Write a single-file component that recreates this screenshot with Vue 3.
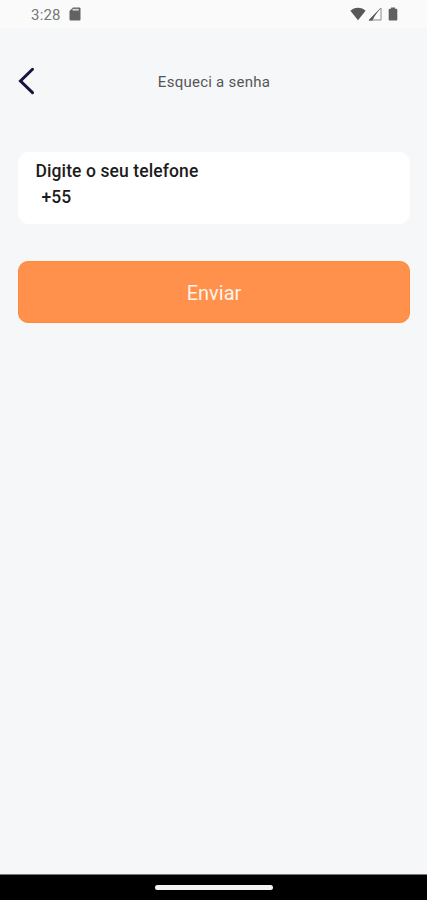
<script setup>
import { ref } from 'vue'

const title = ref('Esqueci a senha')
const phone = ref('+55')
</script>

<template>
  <div class="screen">
    <header class="status">
      <span class="clock">3:28</span>
      <svg class="sd" width="12" height="14" viewBox="0 0 12 14">
        <path d="M4 .5h6.500a1 1 0 0 1 1 1v11a1 1 0 0 1-1 1h-9a1 1 0 0 1-1-1V4z" fill="#626262" />
        <path d="M3.500 2.700h6.300" stroke="#d4d4d4" stroke-width="1.800" />
      </svg>
      <div class="indicators">
        <svg width="16" height="14" viewBox="0 0 16 14">
          <path d="M8 13.200 .4 3.700C2.500 1.700 5 .7 8 .7s5.500 1 7.600 3z" fill="#585858" />
        </svg>
        <svg class="signal" width="14" height="14" viewBox="0 0 14 14">
          <path d="M13 1v12H1z" fill="#fff" stroke="#888" stroke-width="1" />
          <path d="M.5 13.500 12.500 1 6.500 9.500 4.500 13.500z" fill="#5c5c5c" />
        </svg>
        <svg class="battery" width="10" height="14" viewBox="0 0 10 14">
          <path d="M3 .4h4v1.400h1.500a.8.8 0 0 1 .8.800v10.200a.8.8 0 0 1-.8.800h-7a.8.8 0 0 1-.8-.800V2.600a.8.8 0 0 1 .8-.800H3z" fill="#606060" />
        </svg>
      </div>
    </header>

    <nav class="bar">
      <button class="back" type="button" aria-label="Voltar">
        <svg width="17" height="28" viewBox="0 0 17 28">
          <path d="M14.500 2.300 2.500 14l12 11.600" fill="none" stroke="#15143f" stroke-width="3" stroke-linecap="round" stroke-linejoin="miter" />
        </svg>
      </button>
      <h1 class="title">{{ title }}</h1>
    </nav>

    <main class="content">
      <label class="field">
        <span class="label">Digite o seu telefone</span>
        <span class="value">{{ phone }}</span>
      </label>
      <button class="submit" type="button">Enviar</button>
    </main>

    <footer class="gesture"><span class="handle"></span></footer>
  </div>
</template>

<style>
body {
  margin: 0;
  background: #f5f7f9;
}
</style>

<style scoped>
.screen {
  box-sizing: border-box;
  width: 427px;
  height: 900px;
  display: flex;
  flex-direction: column;
  overflow: hidden;
  background: #f5f7f9;
  font-family: Roboto, "Liberation Sans", sans-serif;
}
.screen svg {
  display: block;
}
.status {
  box-sizing: border-box;
  height: 28px;
  padding: 0 29px 0 31px;
  display: flex;
  align-items: center;
  background: #fafafa;
}
.clock {
  width: 38px;
  font-size: 15px;
  line-height: 28px;
  letter-spacing: 0.2px;
  color: #777;
  padding-top: 2px;
}
.indicators {
  margin-left: auto;
  display: flex;
  align-items: center;
}
.signal {
  margin-left: 2px;
}
.battery {
  margin-left: 6px;
}
.bar {
  height: 106px;
  display: grid;
  grid-template-columns: 60px 1fr 60px;
  align-items: center;
}
.back {
  margin: 0 0 0 18px;
  padding: 0;
  width: 17px;
  height: 28px;
  border: 0;
  background: none;
}
.title {
  margin: 2px 0 0;
  padding-left: 1px;
  text-align: center;
  font-size: 15px;
  line-height: 20px;
  font-weight: 400;
  letter-spacing: 0.25px;
  color: #555657;
}
.content {
  flex: 1;
  display: flex;
  flex-direction: column;
  padding: 18px 17px 0 18px;
}
.field {
  box-sizing: border-box;
  height: 72px;
  padding: 6px 17.500px;
  display: flex;
  flex-direction: column;
  border-radius: 11px;
  background: #fff;
  color: #1c1c1c;
  font-weight: 500;
}
.label {
  font-size: 17.500px;
  line-height: 26px;
  letter-spacing: 0.1px;
}
.value {
  padding-left: 6px;
  font-size: 17.500px;
  line-height: 26px;
}
.submit {
  box-sizing: border-box;
  height: 62px;
  margin-top: 37px;
  padding: 1px 0 0;
  border: 1px solid #ff8b38;
  border-radius: 10px;
  background: #ff914d;
  color: #fff4e9;
  font-family: inherit;
  font-size: 20px;
  letter-spacing: 0;
}
.gesture {
  box-sizing: border-box;
  height: 26px;
  display: flex;
  align-items: center;
  justify-content: center;
  border-top: 1px solid #77787a;
  background: #000;
}
.handle {
  width: 118px;
  height: 5px;
  border-radius: 3px;
  background: #f4f4f4;
}
</style>
